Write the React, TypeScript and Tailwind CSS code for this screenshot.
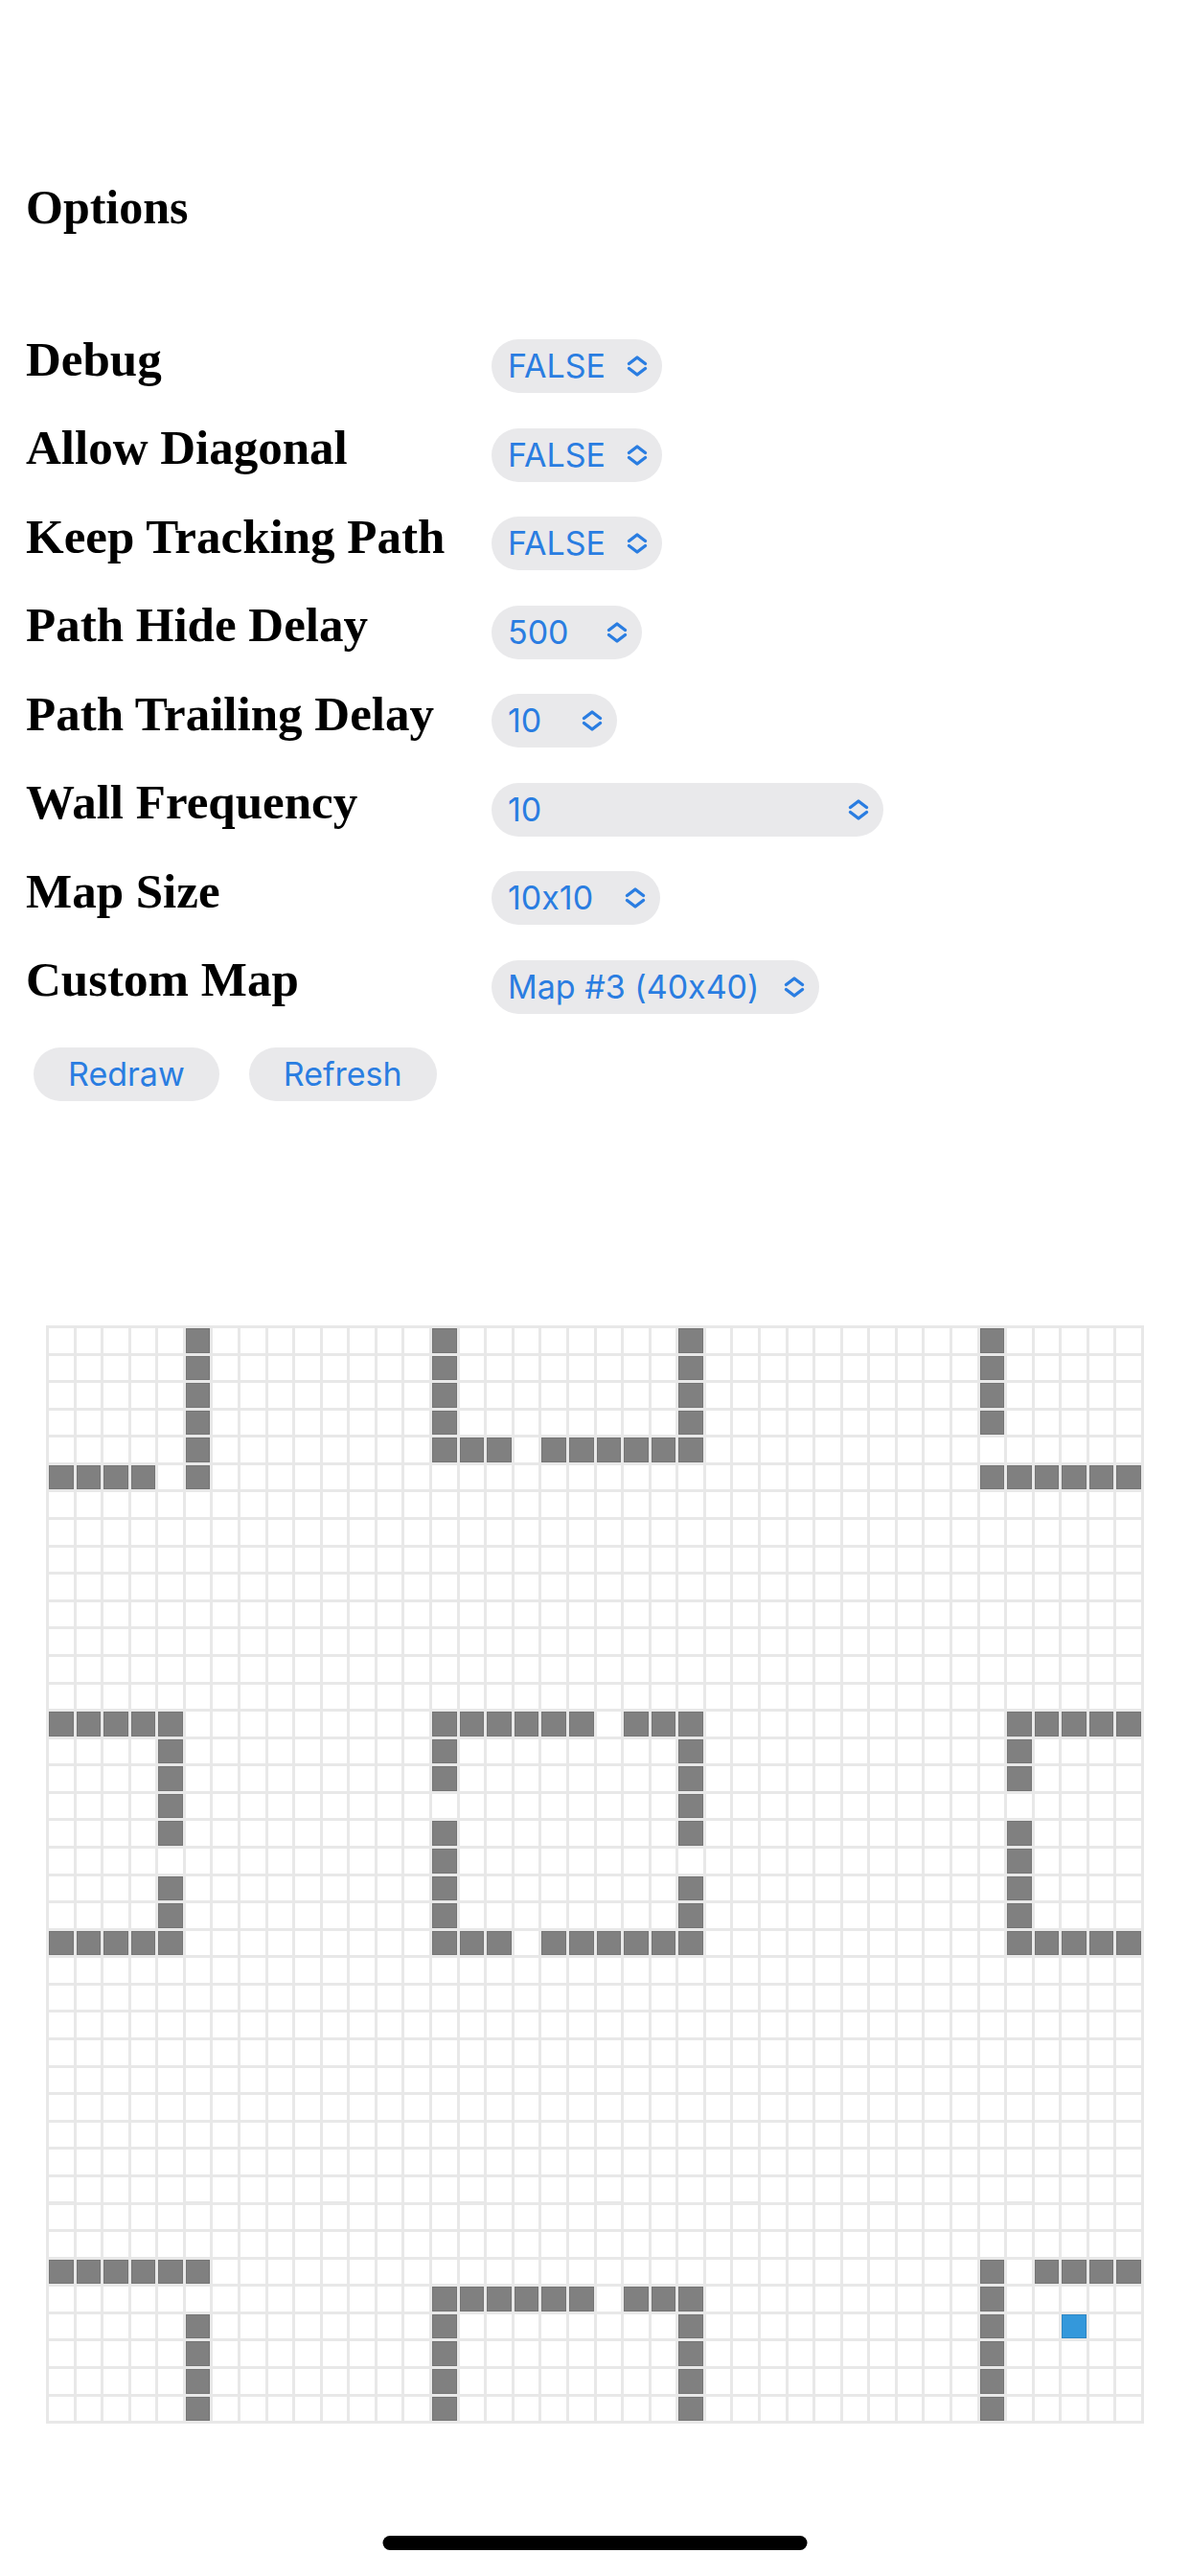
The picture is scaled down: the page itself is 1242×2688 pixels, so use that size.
import React from "react"

const SIZE = 40

const walls = new Set<string>()
const hline = (r: number, c0: number, c1: number) => {
  for (let c = c0; c <= c1; c++) walls.add(`${r},${c}`)
}
const vline = (c: number, r0: number, r1: number) => {
  for (let r = r0; r <= r1; r++) walls.add(`${r},${c}`)
}

// top band
vline(5, 0, 5); hline(5, 0, 3)
vline(14, 0, 4); hline(4, 14, 16); hline(4, 18, 23); vline(23, 0, 4)
vline(34, 0, 3); hline(5, 34, 39)
// middle band
hline(14, 0, 4); vline(4, 15, 18); vline(4, 20, 21); hline(22, 0, 4)
hline(14, 14, 19); hline(14, 21, 23)
vline(14, 15, 16); vline(14, 18, 21)
vline(23, 15, 18); vline(23, 20, 21)
hline(22, 14, 16); hline(22, 18, 23)
hline(14, 35, 39); vline(35, 15, 16); vline(35, 18, 21); hline(22, 35, 39)
// bottom band
hline(34, 0, 5); vline(5, 36, 39)
hline(35, 14, 19); hline(35, 21, 23); vline(14, 36, 39); vline(23, 36, 39)
vline(34, 34, 39); hline(34, 36, 39)

const player = "36,37"

const options = [
  { label: "Debug", value: "FALSE", width: "w-[178px]" },
  { label: "Allow Diagonal", value: "FALSE", width: "w-[178px]" },
  { label: "Keep Tracking Path", value: "FALSE", width: "w-[178px]" },
  { label: "Path Hide Delay", value: "500", width: "w-[157px]" },
  { label: "Path Trailing Delay", value: "10", width: "w-[131px]" },
  { label: "Wall Frequency", value: "10", width: "w-[409px]" },
  { label: "Map Size", value: "10x10", width: "w-[176px]" },
  { label: "Custom Map", value: "Map #3 (40x40)", width: "w-[342px]" },
]

function Chevrons() {
  return (
    <svg width="24" height="24" viewBox="0 0 24 24" fill="none" stroke="currentColor" strokeWidth="3.4" strokeLinecap="round" strokeLinejoin="round">
      <path d="M3.5 9.5 L12 3 L20.5 9.5" />
      <path d="M3.5 14.5 L12 21 L20.5 14.5" />
    </svg>
  )
}

function Select({ value, width }: { value: string; width: string }) {
  return (
    <div className={`${width} h-[56px] rounded-full bg-[#e9e9eb] text-[#2a7de1] flex items-center justify-between pl-[17px] pr-[14px] text-[34px] leading-none`}>
      <span>{value}</span>
      <Chevrons />
    </div>
  )
}

function Button({ children }: { children: React.ReactNode }) {
  return (
    <button className="h-[56px] px-[36px] rounded-full bg-[#e9e9eb] text-[#2a7de1] text-[34px] leading-none">
      {children}
    </button>
  )
}

export default function App() {
  const cells = []
  for (let r = 0; r < SIZE; r++) {
    for (let c = 0; c < SIZE; c++) {
      const key = `${r},${c}`
      const cls = key === player
        ? "bg-[#3498db] border border-[#2d86c4]"
        : walls.has(key)
          ? "bg-[#808080] border border-[#757575]"
          : "bg-white"
      cells.push(<div key={key} className={`aspect-square ${cls}`} />)
    }
  }

  return (
    <div className="relative w-[1242px] min-h-[2688px] bg-white font-['Inter','Liberation_Sans',sans-serif] [font-feature-settings:'calt'_0]">
      <div className="pt-[191px] pl-[27px] font-['Liberation_Serif',serif] font-bold text-[50px] leading-none text-black">
        Options
      </div>

      <div className="mt-[95px] pl-[27px] flex flex-col">
        {options.map((o) => (
          <div key={o.label} className="h-[92.5px] flex items-center">
            <div className="w-[486px] pb-[14px] font-['Liberation_Serif',serif] font-bold text-[51px] leading-none text-black">
              {o.label}
            </div>
            <Select value={o.value} width={o.width} />
          </div>
        ))}
      </div>

      <div className="mt-[17px] pl-[35px] flex gap-[31px]">
        <Button>Redraw</Button>
        <Button>Refresh</Button>
      </div>

      <div className="mt-[234px] mx-auto w-[1146px] bg-[#e8e8e8] p-[3px] grid grid-cols-[repeat(40,minmax(0,1fr))] gap-[3px]">
        {cells}
      </div>

      <div className="absolute bottom-[27px] left-1/2 -translate-x-1/2 w-[443px] h-[15px] rounded-full bg-black" />
    </div>
  )
}
